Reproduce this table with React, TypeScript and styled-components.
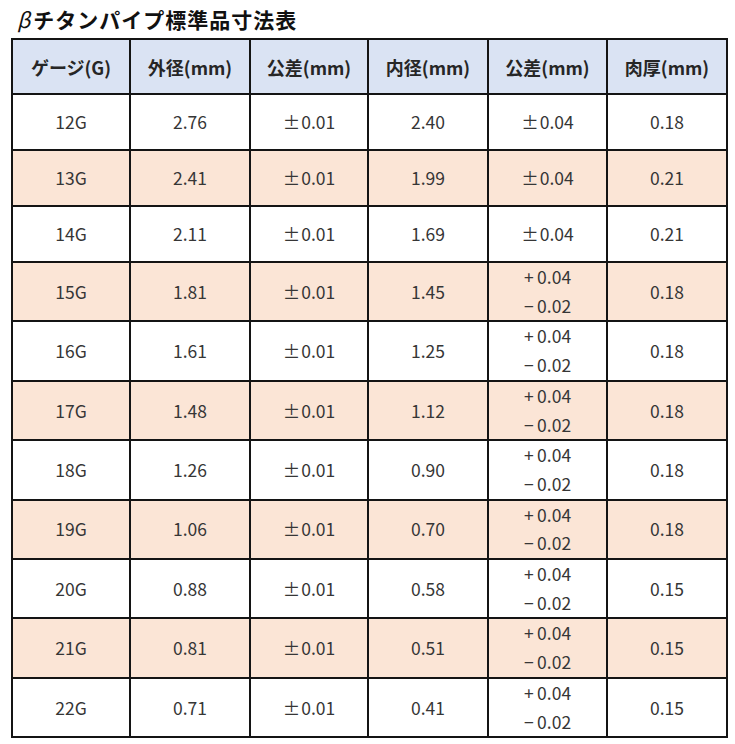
import React from "react";
import styled, { createGlobalStyle } from "styled-components";

const Global = createGlobalStyle`
  html, body { margin: 0; padding: 0; background: #fff; }
  body { font-family: "Noto Sans CJK JP", "Noto Sans", sans-serif; }
`;

const Page = styled.div`
  padding: 5px 0 0 11px;
`;

const Title = styled.h1`
  margin: 0 0 5px 6px;
  font-size: 21px;
  line-height: 28px;
  font-weight: 700;
  color: #111;
  letter-spacing: 1px;
`;

const Beta = styled.span`
  font-style: italic;
  font-weight: 400;
  margin-right: 2px;
`;

const Table = styled.table`
  border-collapse: collapse;
  table-layout: fixed;
  width: 717px;
`;

const Th = styled.th`
  height: 53px;
  padding: 0;
  border: 2px solid #141414;
  background: #dae3f3;
  font-size: 18px;
  font-weight: 700;
  color: #262626;
  text-align: center;
  vertical-align: middle;
  line-height: 24px;
`;

const Tr = styled.tr<{ $pink: boolean }>`
  background: ${(p) => (p.$pink ? "#fbe5d6" : "#ffffff")};
`;

const Td = styled.td`
  height: 54px;
  padding: 0;
  border: 2px solid #141414;
  font-size: 17.5px;
  color: #363636;
  text-align: center;
  vertical-align: middle;
  line-height: 28px;
`;

const Tol = styled.div`
  line-height: 28.7px;
`;

type Row = [string, string, string, string, string[], string];

const T2 = ["+\u20090.04", "−\u20090.02"];
const rows: Row[] = [
  ["12G", "2.76", "±\u200a0.01", "2.40", ["±\u200a0.04"], "0.18"],
  ["13G", "2.41", "±\u200a0.01", "1.99", ["±\u200a0.04"], "0.21"],
  ["14G", "2.11", "±\u200a0.01", "1.69", ["±\u200a0.04"], "0.21"],
  ["15G", "1.81", "±\u200a0.01", "1.45", T2, "0.18"],
  ["16G", "1.61", "±\u200a0.01", "1.25", T2, "0.18"],
  ["17G", "1.48", "±\u200a0.01", "1.12", T2, "0.18"],
  ["18G", "1.26", "±\u200a0.01", "0.90", T2, "0.18"],
  ["19G", "1.06", "±\u200a0.01", "0.70", T2, "0.18"],
  ["20G", "0.88", "±\u200a0.01", "0.58", T2, "0.15"],
  ["21G", "0.81", "±\u200a0.01", "0.51", T2, "0.15"],
  ["22G", "0.71", "±\u200a0.01", "0.41", T2, "0.15"],
];

const widths = [118, 120, 118, 120, 119, 120];
const heads = ["ゲージ(G)", "外径(mm)", "公差(mm)", "内径(mm)", "公差(mm)", "肉厚(mm)"];

export default function App() {
  return (
    <>
      <Global />
      <Page>
        <Title>
          <Beta>β</Beta>チタンパイプ標準品寸法表
        </Title>
        <Table>
          <colgroup>
            {widths.map((w, i) => (
              <col key={i} style={{ width: w }} />
            ))}
          </colgroup>
          <thead>
            <tr>
              {heads.map((h, i) => (
                <Th key={i}>{h}</Th>
              ))}
            </tr>
          </thead>
          <tbody>
            {rows.map((r, i) => (
              <Tr key={r[0]} $pink={i % 2 === 1}>
                <Td>{r[0]}</Td>
                <Td>{r[1]}</Td>
                <Td>{r[2]}</Td>
                <Td>{r[3]}</Td>
                <Td>
                  {r[4].map((t, j) => (
                    <Tol key={j}>{t}</Tol>
                  ))}
                </Td>
                <Td>{r[5]}</Td>
              </Tr>
            ))}
          </tbody>
        </Table>
      </Page>
    </>
  );
}
